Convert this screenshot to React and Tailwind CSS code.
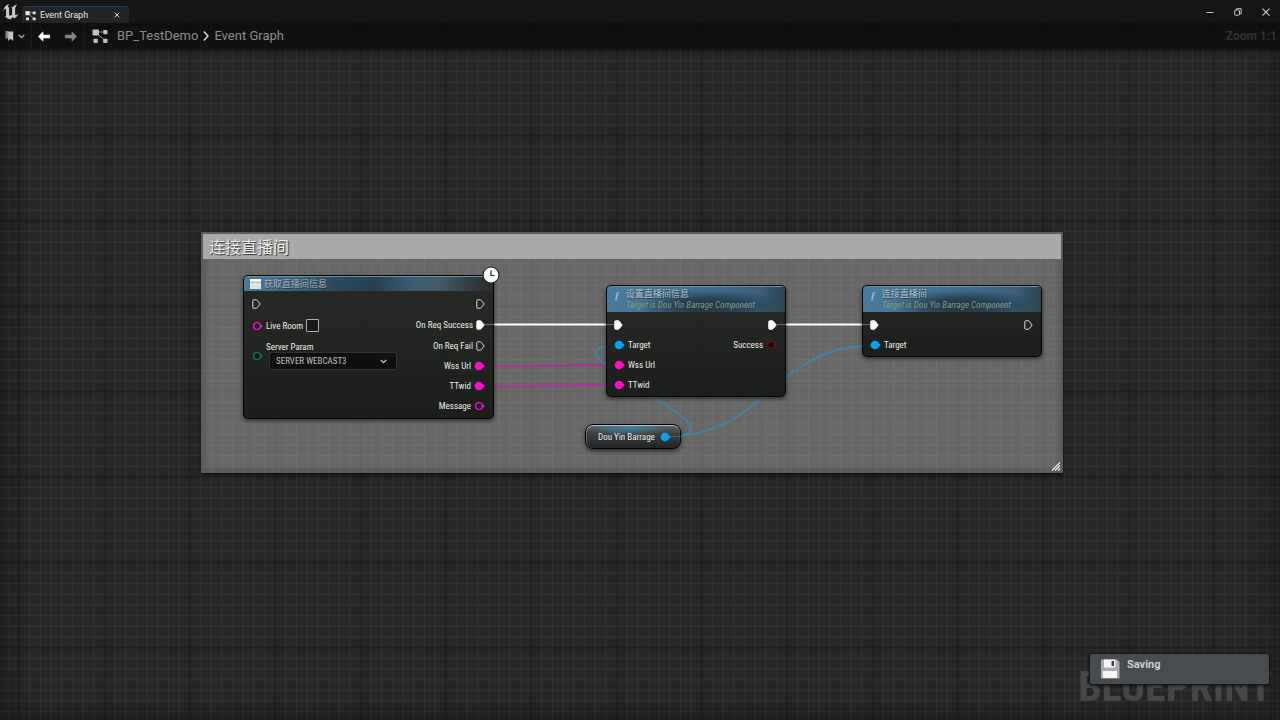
import React from 'react';

const PINK = '#ff10c8';
const BLUE = '#0aa2ee';

function GraphIcon({ className }) {
  return (
    <svg viewBox="0 0 16 16" className={className} fill="currentColor" aria-hidden="true">
      <rect x="0.5" y="1.5" width="6.5" height="6" rx="1" />
      <rect x="11.2" y="2" width="4.3" height="4.2" rx="0.8" />
      <rect x="1.5" y="10.8" width="4.3" height="4.2" rx="0.8" />
      <rect x="11.2" y="10.8" width="4.3" height="4.2" rx="0.8" />
      <path d="M6 4h6M5.5 6l7 6" stroke="currentColor" strokeOpacity="0.7" strokeWidth="1" fill="none" />
    </svg>
  );
}

function Arrow({ className, flip }) {
  return (
    <svg viewBox="0 0 14 12" className={className} fill="currentColor" aria-hidden="true">
      <path d={flip ? 'M14 6 8.3 0.3v3.9H1v3.6h7.3v3.9z' : 'M0 6 5.7 0.3v3.9H13v3.6H5.7v3.9z'} />
    </svg>
  );
}

function ExecPin({ on }) {
  return (
    <svg viewBox="0 0 9 10" className="h-[10px] w-[9px] shrink-0" aria-hidden="true">
      <path
        d="M1.6 0.8h2.6q.5 0 .9.4L8.2 5 5.1 8.8q-.4.4-.9.4H1.6q-.8 0-.8-.8V1.6q0-.8.8-.8z"
        fill={on ? '#fff' : 'none'}
        stroke={on ? '#fff' : '#dcdcdc'}
        strokeWidth="1"
      />
    </svg>
  );
}

function DataPin({ color, on }) {
  return (
    <svg viewBox="0 0 11 10" className="h-[10px] w-[11px] shrink-0" aria-hidden="true">
      <circle cx="5" cy="5" r={on ? 4.3 : 3.4} fill={on ? color : '#120f12'} stroke={on ? 'none' : color} strokeWidth="1.4" />
      <path d="M9 3.2 10.8 5 9 6.8z" fill={color} />
    </svg>
  );
}

function Row({ children, exec }) {
  return <div className={`flex items-center gap-[3px] ${exec ? 'h-[21px]' : 'h-5'}`}>{children}</div>;
}

const nodeShell =
  'absolute flex flex-col overflow-hidden rounded-[5px] border border-black/90 bg-gradient-to-b from-[#242724]/96 to-[#191c19]/97 shadow-[0_2px_4px_rgba(0,0,0,0.55)]';
const pinText = "font-['Roboto_Condensed',Roboto,sans-serif] text-[9px] leading-[10px] text-[#ececec]";

function FunctionNode({ title, className, children }) {
  return (
    <section className={`${nodeShell} ${className}`}>
      <header className="flex h-[26px] items-start gap-[5px] border-t border-[#6690a8] bg-[radial-gradient(ellipse_75px_16px_at_57%_75%,#1f3442_0%,#264152_45%,transparent_100%),linear-gradient(90deg,#4a7a9a_0%,#416d8b_60%,#3b6078_85%,#2c4250_100%)] pl-[6px]">
        <span className="w-2 pt-[2px] text-center font-['Liberation_Serif',serif] text-[11px] leading-[12px] font-bold text-[#7cc4f2] italic">ƒ</span>
        <div className="pt-[2px]">
          <h2 className="text-[9px] leading-[11px] text-[#b9c4ca] [text-shadow:1px_1px_0_rgba(0,0,0,0.5)]">{title}</h2>
          <p className="font-['Roboto_Condensed',Roboto,sans-serif] text-[9px] leading-[11px] whitespace-nowrap text-[#8a9a89] italic">Target is Dou Yin Barrage Component</p>
        </div>
      </header>
      <div className={`flex justify-between pt-[2px] pr-2 pb-[1px] pl-[7px] ${pinText}`}>{children}</div>
    </section>
  );
}

function Wires() {
  return (
    <svg className="pointer-events-none absolute inset-0 h-full w-full" fill="none" aria-hidden="true">
      <g transform="translate(0 -23)">
        <path d="M481 324.500H619M773 324.500H875" stroke="#fff" strokeWidth="1.800" />
        <path d="M479 366.500C530 366.500 570 365 619 365M479 386.500C530 386.500 570 385 619 385" stroke="#c41fa6" strokeWidth="1.400" />
        <path d="M665 436.500C768 436.500 522 345.500 619 345.500M665 436.500C770 436.500 770 345.500 875 345.500" stroke="#2a90c2" strokeWidth="1.300" />
      </g>
    </svg>
  );
}

function InnerWires() {
  return (
    <svg className="pointer-events-none absolute inset-0 h-full w-full" fill="none" aria-hidden="true">
      <g transform="translate(0 -23)">
        <path d="M485 324.500H494M606 324.500H615M777 324.500H786M862 324.500H871" stroke="#fff" strokeOpacity="0.3" />
        <path d="M669 436.500h12" stroke="#2a90c2" strokeOpacity="0.6" />
      </g>
    </svg>
  );
}

function Grid() {
  const minor = [];
  for (let i = 1; i < 8; i += 1) minor.push(`M${i * 32} 0V256M0 ${i * 32}H256`);
  return (
    <svg className="absolute inset-0 h-full w-full" aria-hidden="true">
      <defs>
        <pattern id="grid" width="256" height="256" patternUnits="userSpaceOnUse" patternTransform="translate(19.2 27.4) scale(0.33333)">
          <path d={minor.join('')} stroke="#333" strokeWidth="3" />
          <path d="M0 0V256M0 0H256M256 0V256M0 256H256" stroke="#181818" strokeWidth="3" />
        </pattern>
      </defs>
      <rect width="100%" height="100%" fill="#262626" />
      <rect width="100%" height="100%" fill="url(#grid)" />
    </svg>
  );
}

export default function App() {
  return (
    <div className="flex min-h-screen flex-col overflow-hidden bg-[#151515] font-[Roboto,'Noto_Sans_CJK_SC',sans-serif] text-[#dedede]">
      <header className="flex h-[23px] items-end justify-between">
        <div className="flex h-full items-end">
          <svg viewBox="4.500 5 15.200 15" className="mb-[3px] ml-[3px] h-4 w-4" fill="#c9c9c9" role="img" aria-label="Unreal Engine">
            <path d="M19.130 13.729c-.206.997-1.126 3.557-4.060 4.942l-1.179-1.325-1.988 2a7.338 7.338 0 0 1-5.804-2.978 2.859 2.859 0 0 0 .650.123c.326.006.678-.114.678-.660v-5.394a.890.890 0 0 0-1.116-.890c-.920.212-1.656 2.509-1.656 2.509a7.304 7.304 0 0 1 2.528-5.597 7.408 7.408 0 0 1 3.730-1.721c-1.006.573-1.570 1.507-1.570 2.290 0 1.262.760 1.109.984.923v7.280a1.157 1.157 0 0 0 .148.256 1.075 1.075 0 0 0 .880.445c.760 0 1.747-.868 1.747-.868V9.172c0-.600-.452-1.324-.905-1.572 0 0 .838-.149 1.484.346a5.537 5.537 0 0 1 .387-.425c1.508-1.480 2.929-1.902 4.112-2.112 0 0-2.151 1.690-2.151 3.960 0 1.687.043 5.801.043 5.801.799.771 1.986-.342 3.059-1.441Z" />
          </svg>
          <div className="ml-[3px] flex h-[17px] w-[107px] items-center rounded-t-[3px] border-t border-[#17406b] bg-[#242424] pl-[3px]">
            <GraphIcon className="h-[11px] w-[11px] text-[#e0e0e0]" />
            <span className="ml-1 text-[9px] leading-3 text-[#e6e6e6]">Event Graph</span>
            <button aria-label="Close tab" className="mr-2 ml-auto flex h-2 w-2 items-center justify-center">
              <svg viewBox="0 0 6 6" className="h-[6px] w-[6px]" stroke="#d6d6d6" strokeWidth="1"><path d="M.7.7 5.300 5.300M5.300.7.7 5.300" /></svg>
            </button>
          </div>
        </div>
        <div className="flex h-full items-center gap-[18px] pr-[9px] text-[#c8c8c8]">
          <button aria-label="Minimize"><svg viewBox="0 0 10 10" className="h-[10px] w-[10px]" stroke="currentColor"><path d="M1.500 5.500h7" /></svg></button>
          <button aria-label="Restore"><svg viewBox="0 0 10 10" className="h-[10px] w-[10px]" stroke="currentColor" fill="none"><rect x="1.700" y="3" width="4.800" height="5.200" rx="1" /><path d="M3.500 3V1.700h4.700v5H6.600" /></svg></button>
          <button aria-label="Close"><svg viewBox="0 0 10 10" className="h-[10px] w-[10px]" stroke="currentColor" strokeWidth="1.200"><path d="M1.500 1.700l7 7M8.500 1.700l-7 7" /></svg></button>
        </div>
      </header>

      <main className="relative flex flex-1 flex-col">
        <Grid />
        <div className="pointer-events-none absolute inset-0 shadow-[inset_0_0_30px_rgba(0,0,0,0.4)]" />

        <div className="relative flex h-[26px] items-center bg-[#080808]/70 shadow-[0_1px_2px_rgba(0,0,0,0.5)]">
          <button aria-label="Bookmarks" className="ml-[5px] flex items-center gap-[3px]">
            <svg viewBox="0 0 10 12" className="h-3 w-[10px]" aria-hidden="true">
              <path d="M0.500 1h3v8l-1.500-1-1.500 1z" fill="#8a8a8a" />
              <path d="M3.200 1.500h5v9.500L5.700 8.800 3.200 11z" fill="#c4c4c4" />
            </svg>
            <svg viewBox="0 0 7 5" className="h-[5px] w-[7px]" fill="none" stroke="#bdbdbd" strokeWidth="1.200"><path d="M.7.8 3.500 3.700 6.300.8" /></svg>
          </button>
          <span className="ml-[6px] h-full w-px bg-[#1c1c1c]" />
          <button aria-label="Back" className="ml-[6px]"><Arrow className="h-[11px] w-[13px] text-white" /></button>
          <button aria-label="Forward" className="ml-[13px]"><Arrow flip className="h-[11px] w-[13px] text-[#848484]" /></button>
          <span className="ml-[7px] h-full w-px bg-[#1c1c1c]" />
          <GraphIcon className="ml-[7px] h-4 w-4 text-[#c0c0c0]" />
          <nav className="ml-[9px] flex items-center text-[13px] leading-4 text-[#8c8c8c]">
            <a href="#blueprint">BP_TestDemo</a>
            <svg viewBox="0 0 6 10" className="mx-[5px] h-[10px] w-[6px]" fill="none" stroke="#e3e3e3" strokeWidth="1.400"><path d="M.8.6 5 5 .8 9.400" /></svg>
            <a href="#event-graph">Event Graph</a>
          </nav>
          <span className="mr-[3px] ml-auto text-[12px] leading-4 font-bold text-[#333]">Zoom 1:1</span>
        </div>

        <p className="absolute right-2 bottom-[7px] font-['Roboto_Condensed','Liberation_Sans_Narrow',Roboto,sans-serif] text-[42px] leading-[52px] font-bold text-[#474747]">BLUEPRINT</p>

        <section className="absolute top-[209px] left-[201px] flex h-[241px] w-[862px] flex-col border-2 border-[#5a5a5a]/80 bg-white/30 shadow-[0_1px_4px_rgba(0,0,0,0.9),inset_0_0_8px_rgba(0,0,0,0.25)]">
          <h1 className="h-[25px] bg-[#a9a9a9] pl-[6px] text-[16px] leading-[27px] text-[#ececec] [text-shadow:1px_1px_1px_rgba(0,0,0,0.7)]">连接直播间</h1>
          <svg viewBox="0 0 10 10" className="mt-auto ml-auto h-[10px] w-[10px]" stroke="#e8e8e8" strokeWidth="1.300" aria-hidden="true"><path d="M1 9.500 9 1.500M4 9.500l5-5M7 9.500l2-2" /></svg>
        </section>

        <Wires />

        <section className={`${nodeShell} top-[252px] left-[243px] h-36 w-[251px]`}>
          <header className="flex h-[15px] shrink-0 items-center gap-[3px] border-t border-[#6690a8] bg-[linear-gradient(90deg,#4a7a9a_0%,#3c6581_20%,#2c495c_36%,#263f50_52%,#3e5c70_68%,#455b68_78%,#303a3f_92%,#2a2d2e_100%)] pl-[6px]">
            <svg viewBox="0 0 11 10" className="h-[10px] w-[11px]" aria-hidden="true"><rect width="11" height="10" rx="0.500" fill="#dfe7ea" /><path d="M0 3h11" stroke="#7e98a5" /><rect width="11" height="2.500" fill="#fff" /></svg>
            <h2 className="text-[9px] leading-[12px] text-[#a9b3b8] [text-shadow:1px_1px_0_rgba(0,0,0,0.5)]">获取直播间信息</h2>
          </header>
          <div className={`flex justify-between pt-[2px] pr-2 pl-2 ${pinText}`}>
            <div className="flex flex-col">
              <Row exec><ExecPin /></Row>
              <label className="flex h-[23px] items-center gap-[3px]">
                <DataPin color={PINK} />
                Live Room
                <input className="h-[13px] w-[13px] rounded-[1px] border border-[#b0b0b0] bg-[#181a18]" />
              </label>
              <div className="flex items-center gap-[3px] pt-[5px]">
                <DataPin color="#0b7565" />
                <div className="flex flex-col">
                  <label htmlFor="server">Server Param</label>
                  <div className="relative ml-[3px]">
                    <select id="server" className="block h-[18px] w-32 appearance-none rounded-[2px] border border-[#333] bg-[#0e0f0e] pl-[6px] text-[#c0c0c0]">
                      <option>SERVER WEBCAST3</option>
                    </select>
                    <svg viewBox="0 0 7 5" className="pointer-events-none absolute top-[7px] right-[10px] h-[5px] w-[7px]" fill="none" stroke="#d0d0d0" strokeWidth="1.200"><path d="M.7.8 3.500 3.700 6.300.8" /></svg>
                  </div>
                </div>
              </div>
            </div>
            <div className="flex flex-col items-end">
              <Row exec><ExecPin /></Row>
              <Row exec>On Req Success <ExecPin on /></Row>
              <Row exec>On Req Fail <ExecPin /></Row>
              <Row>Wss Url <DataPin color={PINK} on /></Row>
              <Row>TTwid <DataPin color={PINK} on /></Row>
              <Row>Message <DataPin color={PINK} /></Row>
            </div>
          </div>
        </section>
        <svg viewBox="0 0 18 18" className="absolute top-[243px] left-[482px] h-[18px] w-[18px]" aria-hidden="true">
          <circle cx="9" cy="9" r="8" fill="#fff" stroke="#222" strokeWidth="1.200" />
          <path d="M9 4.500V9.500H12.500" fill="none" stroke="#222" strokeWidth="1.200" />
        </svg>

        <FunctionNode title="设置直播间信息" className="top-[262px] left-[606px] w-[180px]">
          <div>
            <Row exec><ExecPin on /></Row>
            <Row><DataPin color={BLUE} on />Target</Row>
            <Row><DataPin color={PINK} on />Wss Url</Row>
            <Row><DataPin color={PINK} on />TTwid</Row>
          </div>
          <div className="flex flex-col items-end">
            <Row exec><ExecPin on /></Row>
            <Row>Success <DataPin color="#7c0a0a" /></Row>
          </div>
        </FunctionNode>

        <FunctionNode title="连接直播间" className="top-[262px] left-[862px] w-[180px]">
          <div>
            <Row exec><ExecPin on /></Row>
            <Row><DataPin color={BLUE} on />Target</Row>
          </div>
          <div><Row exec><ExecPin /></Row></div>
        </FunctionNode>

        <section className={`absolute top-[401px] left-[585px] flex h-[25px] w-24 items-center justify-between rounded-[8px] border border-black bg-[radial-gradient(ellipse_40px_9px_at_45%_10%,#3d7ea3_0%,transparent_100%),linear-gradient(180deg,#5d6265_0%,#3a3d3f_40%,#232525_100%)] pr-[9px] pl-3 whitespace-nowrap shadow-[inset_0_1px_1px_rgba(255,255,255,0.6),inset_1px_0_0_rgba(255,255,255,0.2),0_2px_4px_rgba(0,0,0,0.6)] ${pinText}`}>
          Dou Yin Barrage <DataPin color={BLUE} on />
        </section>
        <InnerWires />

        <aside role="status" className="absolute right-[10px] bottom-[35px] flex h-8 w-[181px] items-start rounded-[3px] border border-[#151515] bg-[#474c50] pt-[5px] pl-[10px] shadow-[0_1px_3px_rgba(0,0,0,0.6)]">
          <svg viewBox="0 0 20 20" className="h-5 w-5" aria-hidden="true">
            <path d="M1 0.500h16l2.500 2.500v16.500H1z" fill="#a9abad" />
            <path d="M4 0.500h11.500v8H4z" fill="#f6f6f6" />
            <path d="M11.500 2h2.500v5h-2.500z" fill="#3a3d40" />
            <path d="M3 12h14v7H3z" fill="#f6f6f6" />
          </svg>
          <span className="ml-[7px] text-[11px] leading-[12px] font-bold text-[#cdcfd0]">Saving</span>
        </aside>
      </main>
    </div>
  );
}
